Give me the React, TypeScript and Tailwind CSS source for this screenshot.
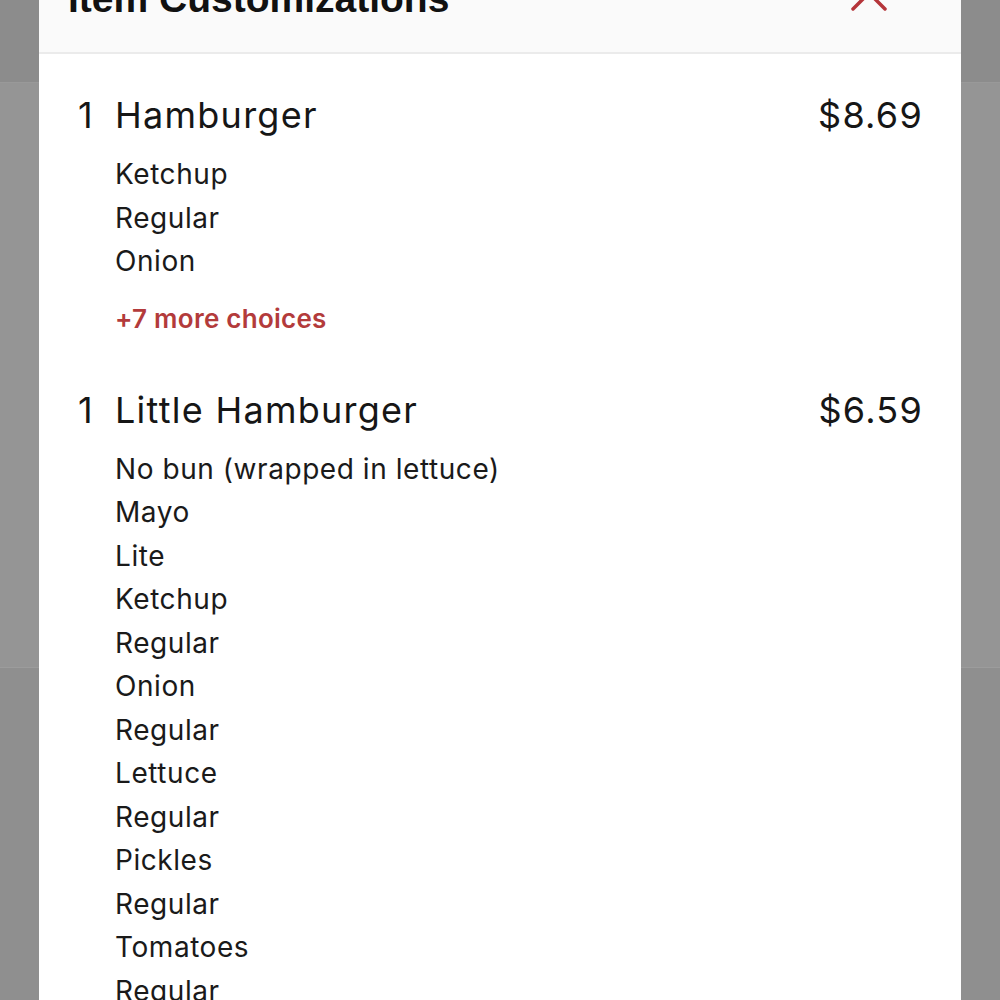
import React from "react";

const items = [
  { qty: 1, name: "Hamburger", price: "$8.69", mods: ["Ketchup", "Regular", "Onion"], more: "+7 more choices" },
  {
    qty: 1,
    name: "Little Hamburger",
    price: "$6.59",
    mods: [
      "No bun (wrapped in lettuce)",
      "Mayo",
      "Lite",
      "Ketchup",
      "Regular",
      "Onion",
      "Regular",
      "Lettuce",
      "Regular",
      "Pickles",
      "Regular",
      "Tomatoes",
      "Regular",
    ],
    more: null as string | null,
  },
];

export default function App() {
  return (
    <div className="relative w-[1000px] h-[1000px] overflow-hidden bg-[#8e8e8e]" style={{ fontFamily: "Inter, 'Noto Sans', sans-serif" }}>
      <div className="flex flex-col h-full">
        <div className="h-[83px] bg-[#8c8c8c] border-b border-[#999999]" />
        <div className="h-[585px] bg-[#959595] border-b border-[#9c9c9c]" />
        <div className="flex-1 bg-[#8f8f8f]" />
      </div>
      <div className="absolute left-[39px] top-0 w-[922px] h-[1000px] bg-white flex flex-col">
        <div className="h-[54px] bg-[#fafafa] border-b-2 border-[#ebebeb] relative overflow-hidden shrink-0">
          <div className="absolute left-[29px] bottom-[34px] text-[39px] leading-none font-bold text-[#111] whitespace-nowrap" style={{ fontFamily: "'Liberation Sans', Arial, sans-serif" }}>
            Item Customizations
          </div>
          <svg className="absolute left-[811px] top-[-26px]" width="38" height="38" viewBox="0 0 38 38">
            <path d="M3 3 L35 35 M35 3 L3 35" stroke="#b5353a" strokeWidth="3.5" strokeLinecap="round" />
          </svg>
        </div>
        <div className="flex flex-col pl-[39px] pr-[38px] pt-[38px]">
          {items.map((it, i) => (
            <div key={i} className={i > 0 ? "mt-[48px]" : ""}>
              <div className="flex items-center justify-between text-[36px] leading-[46px] tracking-[0.035em] text-[#161616]">
                <div className="flex">
                  <span className="w-[37px]">{it.qty}</span>
                  <span>{it.name}</span>
                </div>
                <span>{it.price}</span>
              </div>
              <div className="pl-[37px] mt-[15px] flex flex-col text-[28px] leading-[43.5px] tracking-[0.02em] text-[#1a1a1a]">
                {it.mods.map((m, j) => (
                  <span key={j}>{m}</span>
                ))}
              </div>
              {it.more && (
                <div className="pl-[37px] mt-[15px] text-[26px] leading-[40px] font-semibold tracking-[0.01em] text-[#b33b3b]">{it.more}</div>
              )}
            </div>
          ))}
        </div>
      </div>
    </div>
  );
}
